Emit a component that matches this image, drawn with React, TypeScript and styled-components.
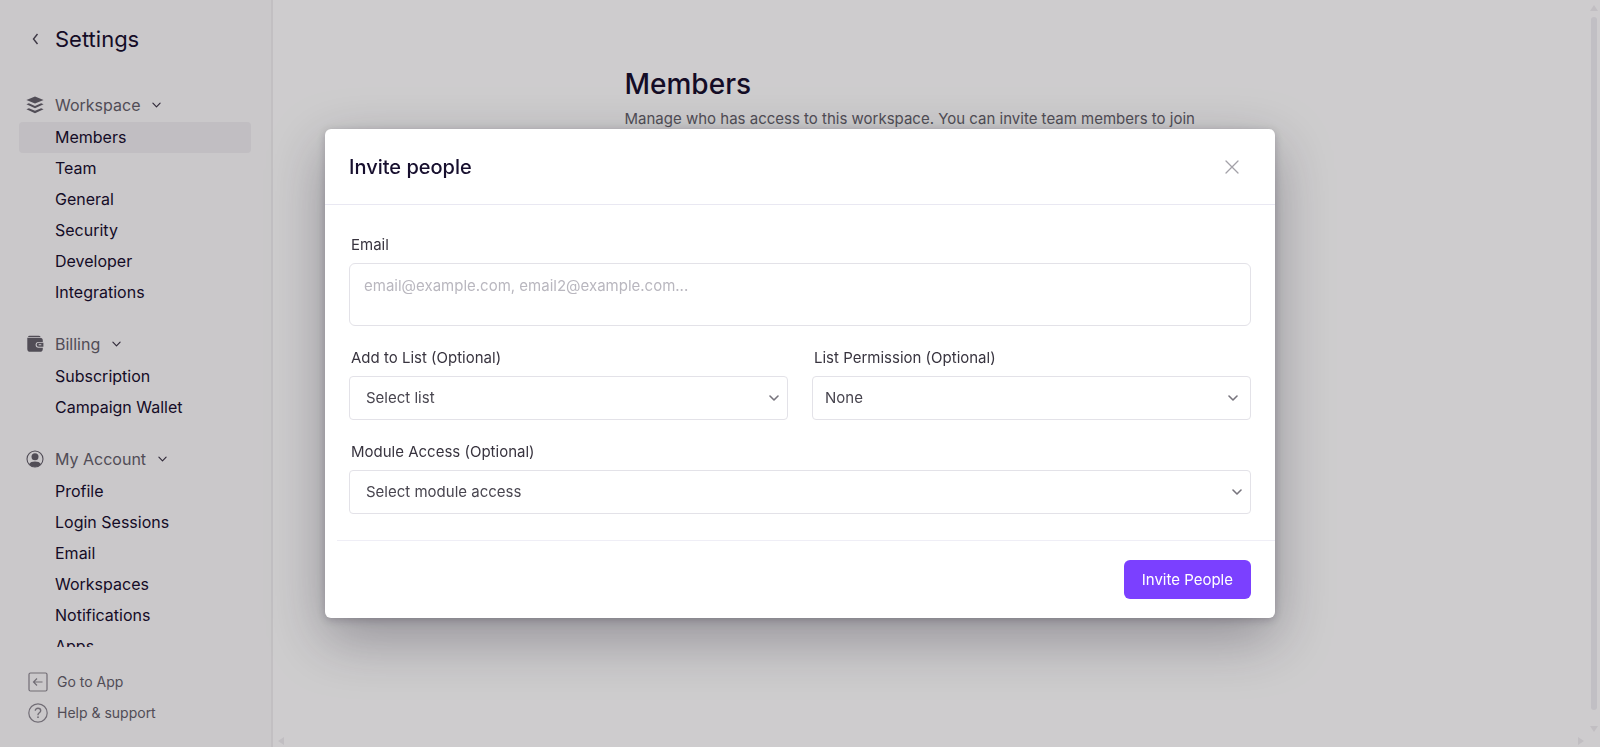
import React from "react";
import styled, { createGlobalStyle } from "styled-components";

const GlobalStyle = createGlobalStyle`
  * { box-sizing: border-box; }
  html, body, #root { height: 100%; }
  body {
    margin: 0;
    overflow: hidden;
    background: #ffffff;
    color: #170f2e;
    font-family: Inter, "Liberation Sans", sans-serif;
    font-size: 15px;
    line-height: 24px;
  }
  button, select, textarea { font: inherit; color: inherit; }
  h1, h2, p, ul { margin: 0; padding: 0; }
  h1, h2 { font-weight: 500; }
  a { color: inherit; text-decoration: none; }
`;

const Page = styled.div`
  display: flex;
  height: 100vh;
`;

const Sidebar = styled.aside`
  display: flex;
  flex-direction: column;
  flex: none;
  width: 273px;
  border-right: 2px solid #f0eff1;
  background: #fbfafb;
`;

const SidebarHeader = styled.header`
  display: flex;
  align-items: center;
  gap: 12px;
  padding: 23px 0 0 28px;
`;

const BackButton = styled.button`
  display: flex;
  justify-content: center;
  width: 15px;
  padding: 0;
  border: 0;
  background: none;
`;

const SidebarTitle = styled.h2`
  font-size: 22px;
  line-height: 32px;
  font-weight: 400;
`;

const Nav = styled.nav`
  display: flex;
  flex-direction: column;
  flex: 1;
  gap: 20px;
  min-height: 0;
  margin-top: 34px;
  overflow: hidden;
`;

const GroupButton = styled.button`
  display: flex;
  align-items: center;
  width: 100%;
  height: 32px;
  padding: 0 0 0 26px;
  border: 0;
  background: none;
  color: #63616a;
  font-size: 16px;
  text-align: left;
`;

const GroupIcon = styled.span`
  display: flex;
  width: 29px;
`;

const GroupChevron = styled.span`
  display: flex;
  margin-left: 12px;
  color: #3a3545;
`;

const NavList = styled.ul`
  padding: 1px 20px 0 19px;
  list-style: none;
`;

const NavLink = styled.a<{ $active?: boolean }>`
  display: block;
  height: 31px;
  padding-left: 36px;
  border-radius: 4px;
  background: ${(p) => (p.$active ? "#efeef0" : "transparent")};
  font-size: 16px;
  line-height: 31px;
`;

const SidebarFooter = styled.footer`
  display: flex;
  flex-direction: column;
  padding: 19px 0 19px 28px;
`;

const FooterLink = styled.a`
  display: flex;
  align-items: center;
  gap: 9px;
  height: 31px;
  color: #63616a;
  font-size: 14px;

  svg { color: #8b8990; }
`;

const Main = styled.main`
  display: flex;
  flex-direction: column;
  flex: 1;
  min-width: 0;
`;

const Content = styled.div`
  flex: 1;
  width: 100%;
  max-width: 612px;
  margin: 0 auto;
  padding: 64px 0 0;
`;

const PageTitle = styled.h1`
  font-size: 28px;
  line-height: 40px;
`;

const PageText = styled.p`
  padding-top: 3px;
  color: #63616a;
`;

const HorizontalTrack = styled.div`
  display: flex;
  justify-content: space-between;
  padding: 0 3px 2px 4px;
`;

const VerticalTrack = styled.div`
  display: flex;
  flex-direction: column;
  align-items: center;
  gap: 5px;
  width: 12px;
  padding: 4px 0 14px;
`;

const Thumb = styled.div`
  flex: 1;
  width: 6px;
  margin-bottom: 10px;
  border-radius: 3px;
  background: #efeff3;
`;

const Backdrop = styled.div`
  position: fixed;
  inset: 0;
  display: flex;
  align-items: center;
  justify-content: center;
  background: rgba(10, 0, 12, 0.2);
`;

const Dialog = styled.form`
  width: 950px;
  max-width: calc(100% - 32px);
  border-radius: 6px;
  background: #ffffff;
  box-shadow: 0 20px 56px rgba(28, 24, 40, 0.34), 0 2px 8px rgba(28, 24, 40, 0.24);
`;

const DialogHeader = styled.header`
  display: flex;
  align-items: center;
  justify-content: space-between;
  height: 76px;
  padding: 0 32px 0 24px;
  border-bottom: 1px solid #e9e8f2;
`;

const DialogTitle = styled.h2`
  font-size: 20px;
  line-height: 28px;
`;

const CloseButton = styled.button`
  display: flex;
  padding: 2px;
  border: 0;
  background: none;
  color: #a3a1a8;
`;

const DialogBody = styled.div`
  display: grid;
  grid-template-columns: 1fr 1fr;
  gap: 20px 24px;
  padding: 28px 24px 26px;
`;

const Field = styled.div<{ $wide?: boolean }>`
  display: flex;
  flex-direction: column;
  gap: 6px;
  grid-column: ${(p) => (p.$wide ? "1 / -1" : "auto")};
`;

const Label = styled.label`
  padding-left: 2px;
  color: #38343f;
`;

const EmailInput = styled.textarea`
  display: block;
  width: 100%;
  height: 63px;
  padding: 10px 14px;
  border: 1px solid #e3e2e8;
  border-radius: 6px;
  outline: 0;
  resize: none;

  &::placeholder { color: #b9b7bf; opacity: 1; }
`;

const SelectWrap = styled.div`
  position: relative;
`;

const Select = styled.select<{ $inset: number }>`
  display: block;
  width: 100%;
  height: 44px;
  padding: 0 32px 0 ${(p) => p.$inset}px;
  border: 1px solid #e3e2e8;
  border-radius: 4px;
  outline: 0;
  background: #ffffff;
  color: #48454f;
  appearance: none;
`;

const SelectChevron = styled.span<{ $right: number }>`
  position: absolute;
  top: 19px;
  right: ${(p) => p.$right}px;
  display: flex;
  color: #77747d;
  pointer-events: none;
`;

const DialogFooter = styled.footer`
  display: flex;
  justify-content: flex-end;
  margin-left: 12px;
  padding: 19px 24px;
  border-top: 1px solid #efeef6;
`;

const SubmitButton = styled.button`
  height: 39px;
  padding: 0 18px;
  border: 0;
  border-radius: 6px;
  background: #7b40ff;
  color: #ffffff;
`;

const Chevron = ({ size = 10, stroke = 1.6 }: { size?: number; stroke?: number }) => (
  <svg width={size} height="6" viewBox="0 0 10 6" fill="none" aria-hidden="true">
    <path d="M1 1l4 4 4-4" stroke="currentColor" strokeWidth={stroke} strokeLinecap="round" strokeLinejoin="round" />
  </svg>
);

const LayersIcon = () => (
  <svg width="18" height="18" viewBox="0 0 18 18" fill="currentColor" aria-hidden="true">
    <path d="M9 .4L17.600 3.900 9 7.400.4 3.900z" />
    <path d="M.4 8.300l2.500-1L9 9.900l6.100-2.600 2.500 1L9 12.300z" />
    <path d="M.4 13.200l2.500-1L9 14.800l6.100-2.600 2.500 1L9 17.200z" />
  </svg>
);

const WalletIcon = () => (
  <svg width="18" height="18" viewBox="0 0 18 18" aria-hidden="true">
    <path d="M3.400.8h9.200q1.700 0 2 1.300H2q.3-1.300 1.400-1.300z" fill="currentColor" />
    <path d="M1.300 2.700h12.700q2.800 0 2.800 2.800v1.400h-4.300a2.900 2.900 0 000 5.800h4.300v1.200q0 2.800-2.800 2.800H4.100q-2.800 0-2.800-2.800z" fill="currentColor" />
    <path d="M12.600 7.800h4.800v4h-4.800a2 2 0 010-4z" fill="currentColor" />
    <path d="M12.700 9.300h2.600v1h-2.600z" fill="#fbfafb" />
  </svg>
);

const AccountIcon = () => (
  <svg width="18" height="18" viewBox="0 0 18 18" aria-hidden="true">
    <circle cx="9" cy="9" r="8" fill="none" stroke="currentColor" strokeWidth="1.100" />
    <circle cx="9" cy="6.800" r="3.500" fill="currentColor" />
    <path d="M3 14.300c1.200-2.200 3.200-2.800 6-2.800s4.800.6 6 2.800A8 8 0 019 17a8 8 0 01-6-2.700z" fill="currentColor" />
  </svg>
);

const ExitIcon = () => (
  <svg width="20" height="20" viewBox="0 0 20 20" fill="none" stroke="currentColor" strokeWidth="1.200" aria-hidden="true">
    <rect x="1" y="1" width="18" height="18" rx="1.500" />
    <path d="M14.500 10h-9M9 6.500L5.500 10 9 13.500" />
  </svg>
);

const HelpIcon = () => (
  <svg width="20" height="20" viewBox="0 0 20 20" fill="none" stroke="currentColor" strokeWidth="1.200" aria-hidden="true">
    <circle cx="10" cy="10" r="9.200" />
    <path d="M7.300 7.800c0-1.600 1.100-2.600 2.700-2.600s2.700 1 2.700 2.500c0 2-2.700 2.100-2.700 4.100v.4" strokeWidth="1.400" />
    <circle cx="10" cy="14.200" r=".9" fill="currentColor" stroke="none" />
  </svg>
);

const Arrow = ({ d }: { d: string }) => (
  <svg width="8" height="8" viewBox="0 0 8 8" aria-hidden="true">
    <path d={d} fill="#efeef1" />
  </svg>
);

const groups = [
  {
    name: "Workspace",
    icon: <LayersIcon />,
    items: ["Members", "Team", "General", "Security", "Developer", "Integrations"],
  },
  { name: "Billing", icon: <WalletIcon />, items: ["Subscription", "Campaign Wallet"] },
  {
    name: "My Account",
    icon: <AccountIcon />,
    items: ["Profile", "Login Sessions", "Email", "Workspaces", "Notifications", "Apps"],
  },
];

type SelectFieldProps = {
  id: string;
  label: string;
  value: string;
  inset: number;
  right: number;
  wide?: boolean;
};

const SelectField = ({ id, label, value, inset, right, wide }: SelectFieldProps) => (
  <Field $wide={wide}>
    <Label htmlFor={id}>{label}</Label>
    <SelectWrap>
      <Select id={id} $inset={inset}>
        <option>{value}</option>
      </Select>
      <SelectChevron $right={right}>
        <Chevron />
      </SelectChevron>
    </SelectWrap>
  </Field>
);

export default function App() {
  return (
    <>
      <GlobalStyle />
      <Page>
        <Sidebar>
          <SidebarHeader>
            <BackButton type="button" aria-label="Back">
              <svg width="7" height="12" viewBox="0 0 7 12" fill="none" aria-hidden="true">
                <path d="M5.500 1L1.500 6l4 5" stroke="#4a4653" strokeWidth="1.400" />
              </svg>
            </BackButton>
            <SidebarTitle>Settings</SidebarTitle>
          </SidebarHeader>
          <Nav>
            {groups.map((group) => (
              <div key={group.name}>
                <GroupButton type="button" aria-expanded="true">
                  <GroupIcon>{group.icon}</GroupIcon>
                  {group.name}
                  <GroupChevron>
                    <Chevron size={9} stroke={1.3} />
                  </GroupChevron>
                </GroupButton>
                <NavList>
                  {group.items.map((item) => (
                    <li key={item}>
                      <NavLink href="#" $active={item === "Members"}>
                        {item}
                      </NavLink>
                    </li>
                  ))}
                </NavList>
              </div>
            ))}
          </Nav>
          <SidebarFooter>
            <FooterLink href="#">
              <ExitIcon />
              Go to App
            </FooterLink>
            <FooterLink href="#">
              <HelpIcon />
              Help &amp; support
            </FooterLink>
          </SidebarFooter>
        </Sidebar>
        <Main>
          <Content>
            <PageTitle>Members</PageTitle>
            <PageText>Manage who has access to this workspace. You can invite team members to join</PageText>
          </Content>
          <HorizontalTrack>
            <Arrow d="M7 0v8L1 4z" />
            <Arrow d="M1 0v8l6-4z" />
          </HorizontalTrack>
        </Main>
        <VerticalTrack>
          <Arrow d="M0 7h8L4 1z" />
          <Thumb />
          <Arrow d="M0 1h8L4 7z" />
        </VerticalTrack>
      </Page>
      <Backdrop>
        <Dialog role="dialog" aria-modal="true" aria-labelledby="invite-title">
          <DialogHeader>
            <DialogTitle id="invite-title">Invite people</DialogTitle>
            <CloseButton type="button" aria-label="Close">
              <svg width="18" height="18" viewBox="0 0 18 18" fill="none" aria-hidden="true">
                <path d="M3 3l12 12M15 3L3 15" stroke="currentColor" strokeWidth="1.300" strokeLinecap="round" />
              </svg>
            </CloseButton>
          </DialogHeader>
          <DialogBody>
            <Field $wide>
              <Label htmlFor="email">Email</Label>
              <EmailInput id="email" placeholder="email@example.com, email2@example.com..." />
            </Field>
            <SelectField id="list" label="Add to List (Optional)" value="Select list" inset={16} right={9} />
            <SelectField id="permission" label="List Permission (Optional)" value="None" inset={12} right={13} />
            <SelectField id="module" label="Module Access (Optional)" value="Select module access" inset={16} right={9} wide />
          </DialogBody>
          <DialogFooter>
            <SubmitButton type="button">Invite People</SubmitButton>
          </DialogFooter>
        </Dialog>
      </Backdrop>
    </>
  );
}
